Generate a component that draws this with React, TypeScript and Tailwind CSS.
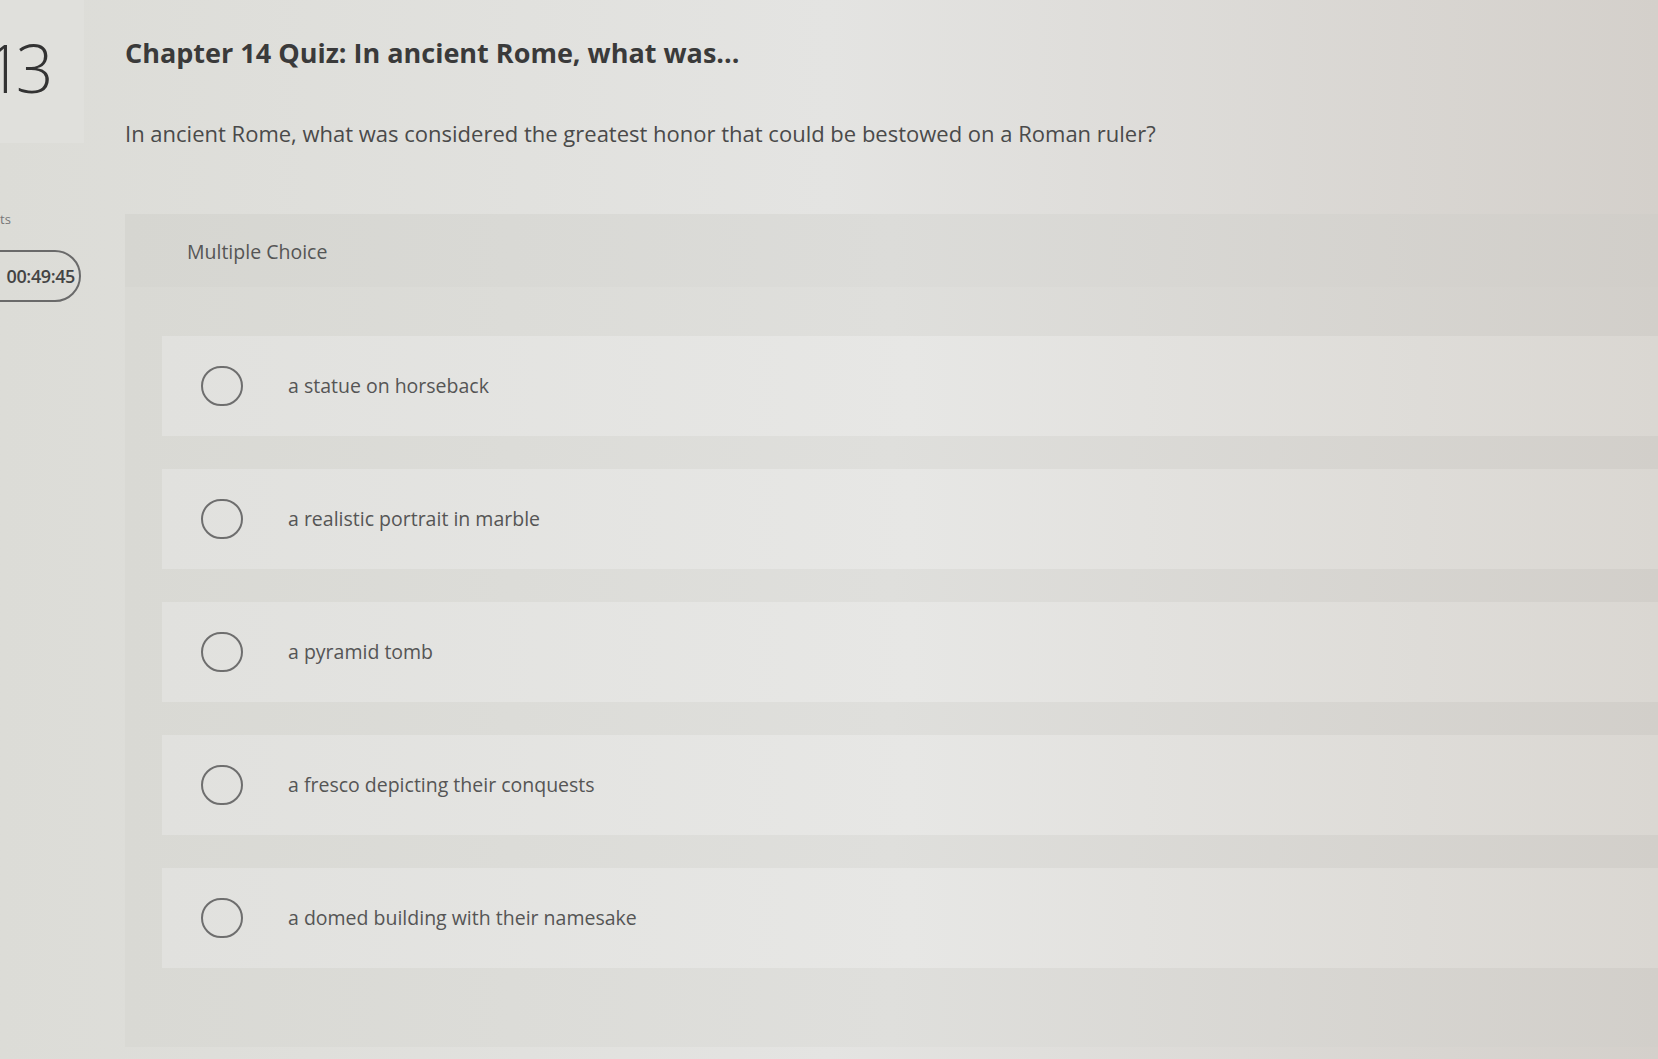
import React from "react";

const options = [
  "a statue on horseback",
  "a realistic portrait in marble",
  "a pyramid tomb",
  "a fresco depicting their conquests",
  "a domed building with their namesake",
];

export default function App() {
  return (
    <div
      className="w-[1658px] h-[1059px] overflow-hidden flex bg-gradient-to-r from-[#dcdcd7] via-[#e4e4e2] to-[#d4d0cb] text-[#3c3c3c]"
      style={{ fontFamily: "'Open Sans', Lato, sans-serif" }}
    >
      <aside className="w-[125px] shrink-0 flex flex-col">
        <div className="h-[143px] w-[84px] bg-[#e0e0dc] flex items-start overflow-hidden">
          <span className="-ml-[15px] mt-[34px] text-[66px] leading-none font-light tracking-[-7px] text-[#333]">13</span>
        </div>
        <span className="mt-[70px] text-[13px] leading-none text-[#777]">ts</span>
        <div className="mt-[24px] -ml-[30px] w-[111px] h-[52px] rounded-full border-2 border-[#6a6a6a] flex items-center justify-end pr-[4px]">
          <span className="text-[18px] leading-none font-semibold tracking-[-0.4px] text-[#444]">00:49:45</span>
        </div>
      </aside>
      <main className="flex-1 flex flex-col">
        <h1 className="mt-[36px] text-[27px] leading-[34px] font-bold text-[#3a3a3a]">
          Chapter 14 Quiz: In ancient Rome, what was...
        </h1>
        <p className="mt-[49px] text-[22px] leading-[28px] text-[#4a4a4a]">
          In ancient Rome, what was considered the greatest honor that could be bestowed on a Roman ruler?
        </p>
        <section className="mt-[67px] flex-1 mb-[12px] flex flex-col bg-gradient-to-r from-[#d9d9d4] via-[#dfdfdc] to-[#d2cfca]">
          <div className="h-[73px] pl-[62px] pt-[25px] bg-gradient-to-r from-[#d6d6d1] via-[#dcdcd9] to-[#d1cec9]">
            <span className="text-[19.5px] leading-[26px] text-[#555]">Multiple Choice</span>
          </div>
          <div className="pt-[49px] pl-[37px] flex flex-col gap-[33px]">
            {options.map((o) => (
              <div
                key={o}
                className="h-[100px] flex items-center bg-gradient-to-r from-[#e1e1de] via-[#e7e7e5] to-[#dad7d2]"
              >
                <div className="ml-[39px] w-[42px] h-[40px] rounded-full border-2 border-[#6e6e6e] shrink-0" />
                <span className="ml-[45px] text-[19.5px] text-[#555]">{o}</span>
              </div>
            ))}
          </div>
        </section>
      </main>
    </div>
  );
}
